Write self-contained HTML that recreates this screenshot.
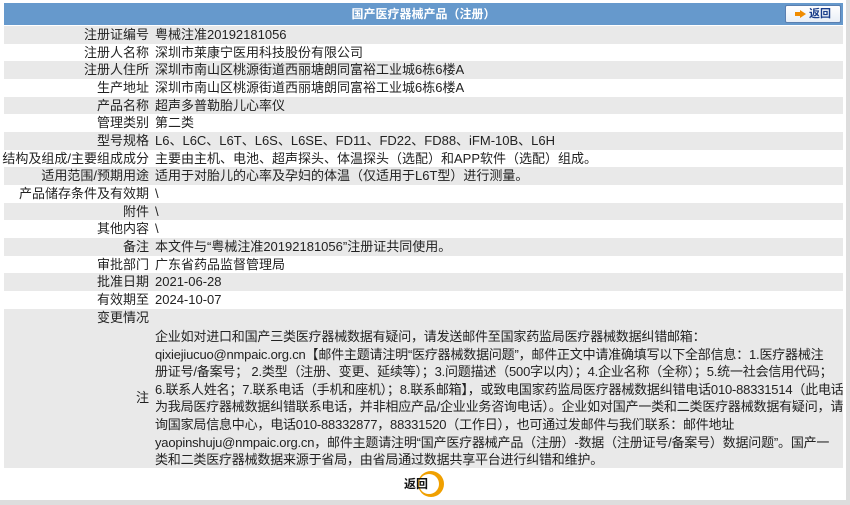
<!DOCTYPE html>
<html><head><meta charset="utf-8"><style>
body{margin:0;width:850px;height:505px;background:#fff;font-family:"Liberation Sans","Noto Sans CJK SC",sans-serif;font-size:13px;color:#222;position:relative;overflow:hidden}
.hdr{position:absolute;left:4px;top:3px;width:839px;height:22px;background:#6699cc;color:#fff;font-weight:bold;font-size:12px;line-height:22px;text-align:center}
.btn{position:absolute;left:785px;top:5px;width:56px;height:18px;background:linear-gradient(#fff,#e8eef6);border:1px solid #5a7fb0;border-radius:2px;box-sizing:border-box;font-size:11px;line-height:16px;color:#1a3d8a;font-weight:bold;text-align:left;padding-left:10px}
.btn b{display:inline-block;width:0;height:0;border-left:6px solid #f08c00;border-top:4px solid transparent;border-bottom:4px solid transparent;vertical-align:middle;margin-right:3px;margin-left:4px;position:relative}
.btn b:before{content:"";position:absolute;left:-11px;top:-2px;width:5px;height:4px;background:#f08c00}
.rows{position:absolute;left:4px;top:26px;width:839px}
.r{height:17.67px;line-height:17.67px;white-space:nowrap;position:relative}
.g{background:#e9e9e9}
.l{position:absolute;right:694px;text-align:right}
.v{position:absolute;left:151px}
.note{position:absolute;left:4px;top:309px;width:839px;height:159px;background:#e9e9e9;overflow:hidden}
.note .l2{position:absolute;right:694px;top:0;line-height:17.6px}
.note .zh{position:absolute;right:694px;top:78px}
.note .txt{position:absolute;left:151px;top:19px;line-height:17.6px;white-space:nowrap;letter-spacing:-0.2px}
.sb{position:absolute;right:0;top:0;width:4px;height:505px;background:#ddd}
.bb{position:absolute;left:0;bottom:0;width:850px;height:5px;background:#ddd}
.ret{position:absolute;left:404px;top:475px;font-weight:bold;font-size:12px;color:#111}
.circ{position:absolute;left:418px;top:471px;width:26px;height:26px;border-radius:50%;background:#f0a000}
.circ i{position:absolute;left:1px;top:3px;width:20px;height:20px;border-radius:50%;background:#fff}
</style></head><body>
<div class="hdr">国产医疗器械产品（注册）</div>
<div class="btn"><b></b>返回</div>
<div class="rows">
<div class="r g"><span class="l">注册证编号</span><span class="v">粤械注准20192181056</span></div>
<div class="r"><span class="l">注册人名称</span><span class="v">深圳市莱康宁医用科技股份有限公司</span></div>
<div class="r g"><span class="l">注册人住所</span><span class="v">深圳市南山区桃源街道西丽塘朗同富裕工业城6栋6楼A</span></div>
<div class="r"><span class="l">生产地址</span><span class="v">深圳市南山区桃源街道西丽塘朗同富裕工业城6栋6楼A</span></div>
<div class="r g"><span class="l">产品名称</span><span class="v">超声多普勒胎儿心率仪</span></div>
<div class="r"><span class="l">管理类别</span><span class="v">第二类</span></div>
<div class="r g"><span class="l">型号规格</span><span class="v">L6、L6C、L6T、L6S、L6SE、FD11、FD22、FD88、iFM-10B、L6H</span></div>
<div class="r"><span class="l">结构及组成/主要组成成分</span><span class="v">主要由主机、电池、超声探头、体温探头（选配）和APP软件（选配）组成。</span></div>
<div class="r g"><span class="l">适用范围/预期用途</span><span class="v">适用于对胎儿的心率及孕妇的体温（仅适用于L6T型）进行测量。</span></div>
<div class="r"><span class="l">产品储存条件及有效期</span><span class="v">\</span></div>
<div class="r g"><span class="l">附件</span><span class="v">\</span></div>
<div class="r"><span class="l">其他内容</span><span class="v">\</span></div>
<div class="r g"><span class="l">备注</span><span class="v">本文件与“粤械注准20192181056”注册证共同使用。</span></div>
<div class="r"><span class="l">审批部门</span><span class="v">广东省药品监督管理局</span></div>
<div class="r g"><span class="l">批准日期</span><span class="v">2021-06-28</span></div>
<div class="r"><span class="l">有效期至</span><span class="v">2024-10-07</span></div>
</div>
<div class="note">
<span class="l2">变更情况</span>
<span class="zh">注</span>
<div class="txt">企业如对进口和国产三类医疗器械数据有疑问，请发送邮件至国家药监局医疗器械数据纠错邮箱：<br>qixiejiucuo@nmpaic.org.cn【邮件主题请注明“医疗器械数据问题”，邮件正文中请准确填写以下全部信息：1.医疗器械注<br>册证号/备案号； 2.类型（注册、变更、延续等）；3.问题描述（500字以内）；4.企业名称（全称）；5.统一社会信用代码；<br>6.联系人姓名；7.联系电话（手机和座机）；8.联系邮箱】，或致电国家药监局医疗器械数据纠错电话010-88331514（此电话<br>为我局医疗器械数据纠错联系电话，并非相应产品/企业业务咨询电话）。企业如对国产一类和二类医疗器械数据有疑问，请咨<br>询国家局信息中心，电话010-88332877，88331520（工作日），也可通过发邮件与我们联系：邮件地址<br>yaopinshuju@nmpaic.org.cn，邮件主题请注明“国产医疗器械产品（注册）-数据（注册证号/备案号）数据问题”。国产一<br>类和二类医疗器械数据来源于省局，由省局通过数据共享平台进行纠错和维护。</div>
</div>
<div class="circ"><i></i></div>
<div class="ret">返回</div>
<div class="sb"></div>
<div class="bb"></div>
</body></html>
